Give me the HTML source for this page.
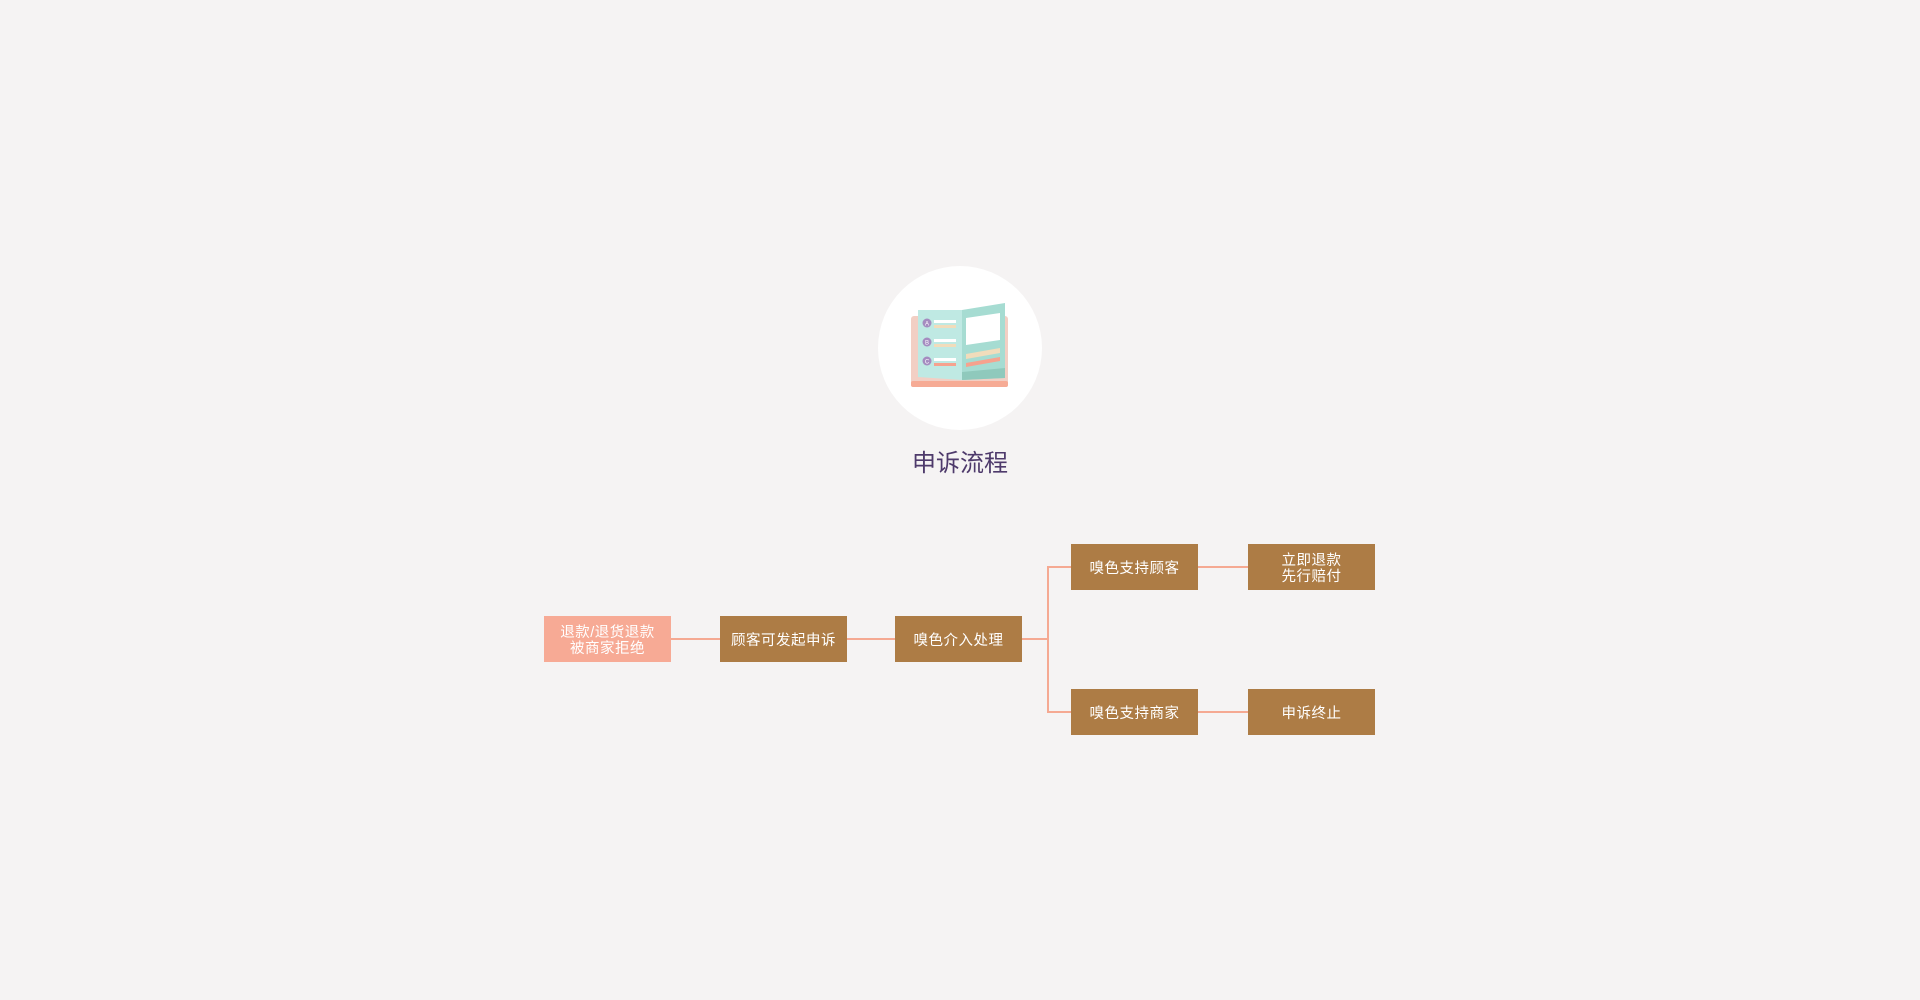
<!DOCTYPE html>
<html><head><meta charset="utf-8"><style>
body{margin:0;width:1920px;height:1000px;background:#f5f3f3;position:relative;font-family:"Liberation Sans","Noto Sans CJK SC",sans-serif;overflow:hidden}
.c{position:absolute;left:878px;top:266px;width:164px;height:164px;border-radius:50%;background:#fff}
.t{position:absolute;left:860px;top:443px;width:200px;text-align:center;font-size:24px;color:#4e3a6b}
.b{position:absolute;width:127px;height:43px;padding-top:3px;background:#ad7c45;color:#fff;font-size:14.5px;line-height:16px;display:flex;align-items:center;justify-content:center;text-align:center;letter-spacing:0.5px}
.l{position:absolute;background:#f5a992}
</style></head><body>
<div class="c"></div>
<svg style="position:absolute;left:860px;top:250px" width="200" height="150" viewBox="0 0 200 150">
<rect x="51" y="66" width="97" height="71" rx="3" fill="#f2cfc4"/>
<rect x="51" y="131" width="97" height="6" rx="2" fill="#f6ab95"/>
<polygon points="58,60 102,60 102,130 58,127" fill="#bfe9e3"/>
<polygon points="102,60 145,53 145,128 102,130" fill="#a6dcd2"/>
<polygon points="102,122 145,118 145,128 102,130" fill="#8fc9bc"/>
<polygon points="106,68 140,63 140,90 106,95" fill="#fff"/>
<polygon points="106,104 140,98 140,103 106,109" fill="#f1dcbb"/>
<polygon points="106,113 140,107 140,111 106,117" fill="#f6a28e"/>
<circle cx="67" cy="73" r="4.5" fill="#a58cc0"/><circle cx="67" cy="92" r="4.5" fill="#a58cc0"/><circle cx="67" cy="111" r="4.5" fill="#a58cc0"/>
<text x="67" y="75.5" font-size="6" fill="#fff" text-anchor="middle" font-family="Liberation Sans">A</text>
<text x="67" y="94.5" font-size="6" fill="#fff" text-anchor="middle" font-family="Liberation Sans">B</text>
<text x="67" y="113.5" font-size="6" fill="#fff" text-anchor="middle" font-family="Liberation Sans">C</text>
<rect x="74" y="70" width="22" height="3" fill="#fff"/><rect x="74" y="75" width="22" height="3" fill="#f1dcbb"/>
<rect x="74" y="89" width="22" height="3" fill="#fff"/><rect x="74" y="94" width="22" height="3" fill="#f1dcbb"/>
<rect x="74" y="108" width="22" height="3" fill="#fff"/><rect x="74" y="113" width="22" height="3" fill="#f6a28e"/>
</svg>
<div class="t">申诉流程</div>
<div class="l" style="left:671px;top:638px;width:377px;height:2px"></div>
<div class="l" style="left:1047px;top:566px;width:2px;height:147px"></div>
<div class="l" style="left:1047px;top:566px;width:201px;height:2px"></div>
<div class="l" style="left:1047px;top:711px;width:201px;height:2px"></div>
<div class="b" style="left:544px;top:616px;background:#f7aa95">退款/退货退款<br>被商家拒绝</div>
<div class="b" style="left:720px;top:616px">顾客可发起申诉</div>
<div class="b" style="left:895px;top:616px">嗅色介入处理</div>
<div class="b" style="left:1071px;top:544px">嗅色支持顾客</div>
<div class="b" style="left:1248px;top:544px">立即退款<br>先行赔付</div>
<div class="b" style="left:1071px;top:689px">嗅色支持商家</div>
<div class="b" style="left:1248px;top:689px">申诉终止</div>
</body></html>
